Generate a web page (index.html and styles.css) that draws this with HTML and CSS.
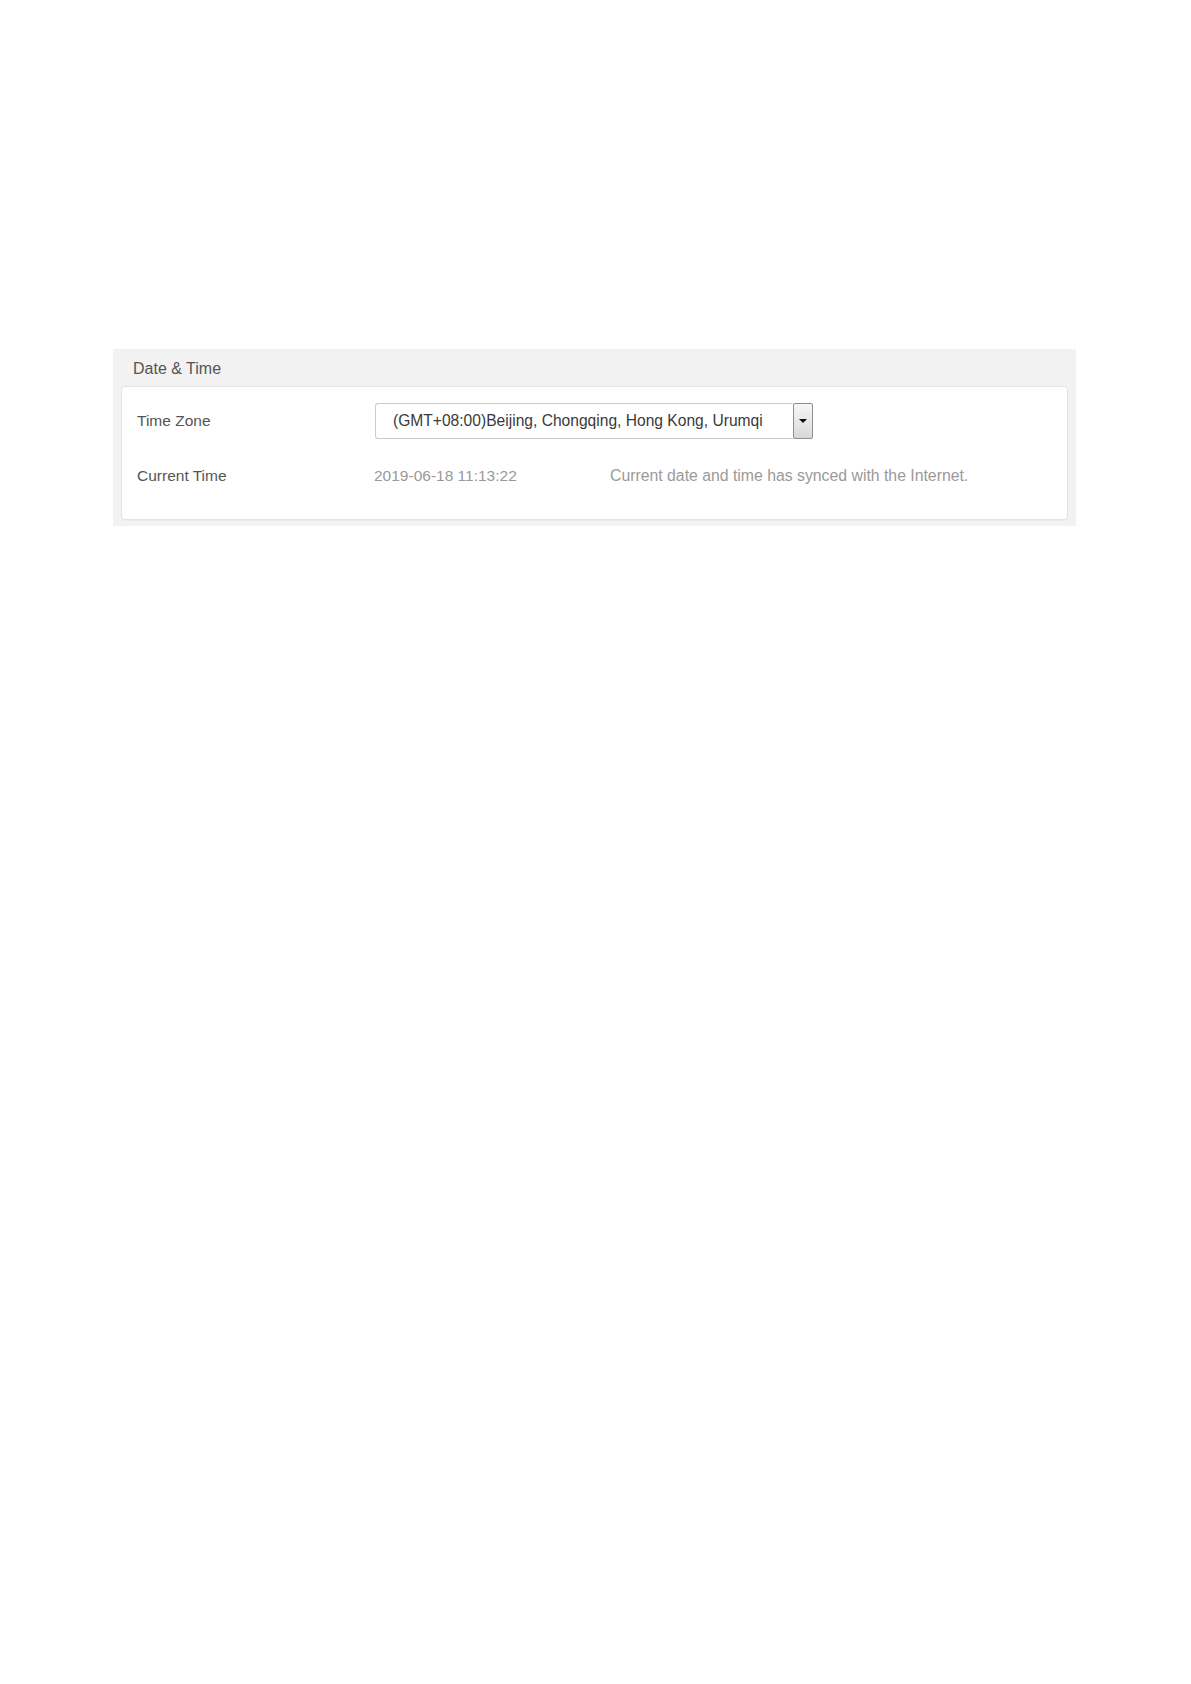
FILE: index.html
```html
<!DOCTYPE html>
<html>
<head>
<meta charset="utf-8">
<link rel="stylesheet" href="styles.css">
</head>
<body>
<div class="page">
  <div class="panel">
    <div class="panel-title">Date &amp; Time</div>
    <div class="card">
      <div class="row row-tz">
        <div class="label">Time Zone</div>
        <div class="select">
          <div class="select-value">(GMT+08:00)Beijing, Chongqing, Hong Kong, Urumqi</div>
          <div class="select-btn"><span class="tri"></span></div>
        </div>
      </div>
      <div class="row row-time">
        <div class="label">Current Time</div>
        <div class="value">2019-06-18 11:13:22</div>
        <div class="msg">Current date and time has synced with the Internet.</div>
      </div>
    </div>
  </div>
</div>
</body>
</html>
```
FILE: styles.css
```css
html, body {
  margin: 0;
  padding: 0;
  background: #ffffff;
}
body {
  font-family: "Liberation Sans", Arial, sans-serif;
}
.page {
  padding: 349px 0 0 113px;
}
.panel {
  width: 963px;
  background: #f2f2f2;
  padding: 0 8px 6px 8px;
  box-sizing: border-box;
}
.panel-title {
  height: 37px;
  line-height: 37px;
  padding: 1px 0 0 12px;
  box-sizing: border-box;
  font-size: 16px;
  color: #555555;
}
.card {
  background: #ffffff;
  border: 1px solid #e3e3e3;
  border-radius: 4px;
  height: 134px;
  box-sizing: border-box;
  padding: 16px 0 0 15px;
  box-shadow: 0 1px 1px rgba(0,0,0,0.03);
}
.row {
  display: flex;
  align-items: center;
}
.row-tz {
  height: 36px;
}
.row-time {
  margin-top: 27px;
  height: 20px;
  line-height: 20px;
}
.label {
  width: 238px;
  flex: none;
  font-size: 15.5px;
  color: #555555;
}
.select {
  display: flex;
  height: 36px;
  width: 438px;
}
.select-value {
  flex: 1;
  border: 1px solid #cccccc;
  border-right: none;
  border-radius: 3px 0 0 3px;
  box-sizing: border-box;
  height: 36px;
  line-height: 34px;
  padding-left: 17px;
  font-size: 15.6px;
  color: #3a3a3a;
  white-space: nowrap;
}
.select-btn {
  width: 20px;
  height: 36px;
  box-sizing: border-box;
  border: 1px solid #8e8e8e;
  border-radius: 2px;
  background: linear-gradient(to bottom, #f6f6f6 0%, #e6e6e6 60%, #d8d8d8 100%);
  display: flex;
  align-items: center;
  justify-content: center;
}
.tri {
  width: 0;
  height: 0;
  border-left: 4px solid transparent;
  border-right: 4px solid transparent;
  border-top: 4px solid #111111;
}
.value {
  width: 236px;
  flex: none;
  margin-left: -1px;
  font-size: 15.5px;
  color: #999999;
}
.msg {
  font-size: 15.8px;
  color: #9a9a9a;
}
```
